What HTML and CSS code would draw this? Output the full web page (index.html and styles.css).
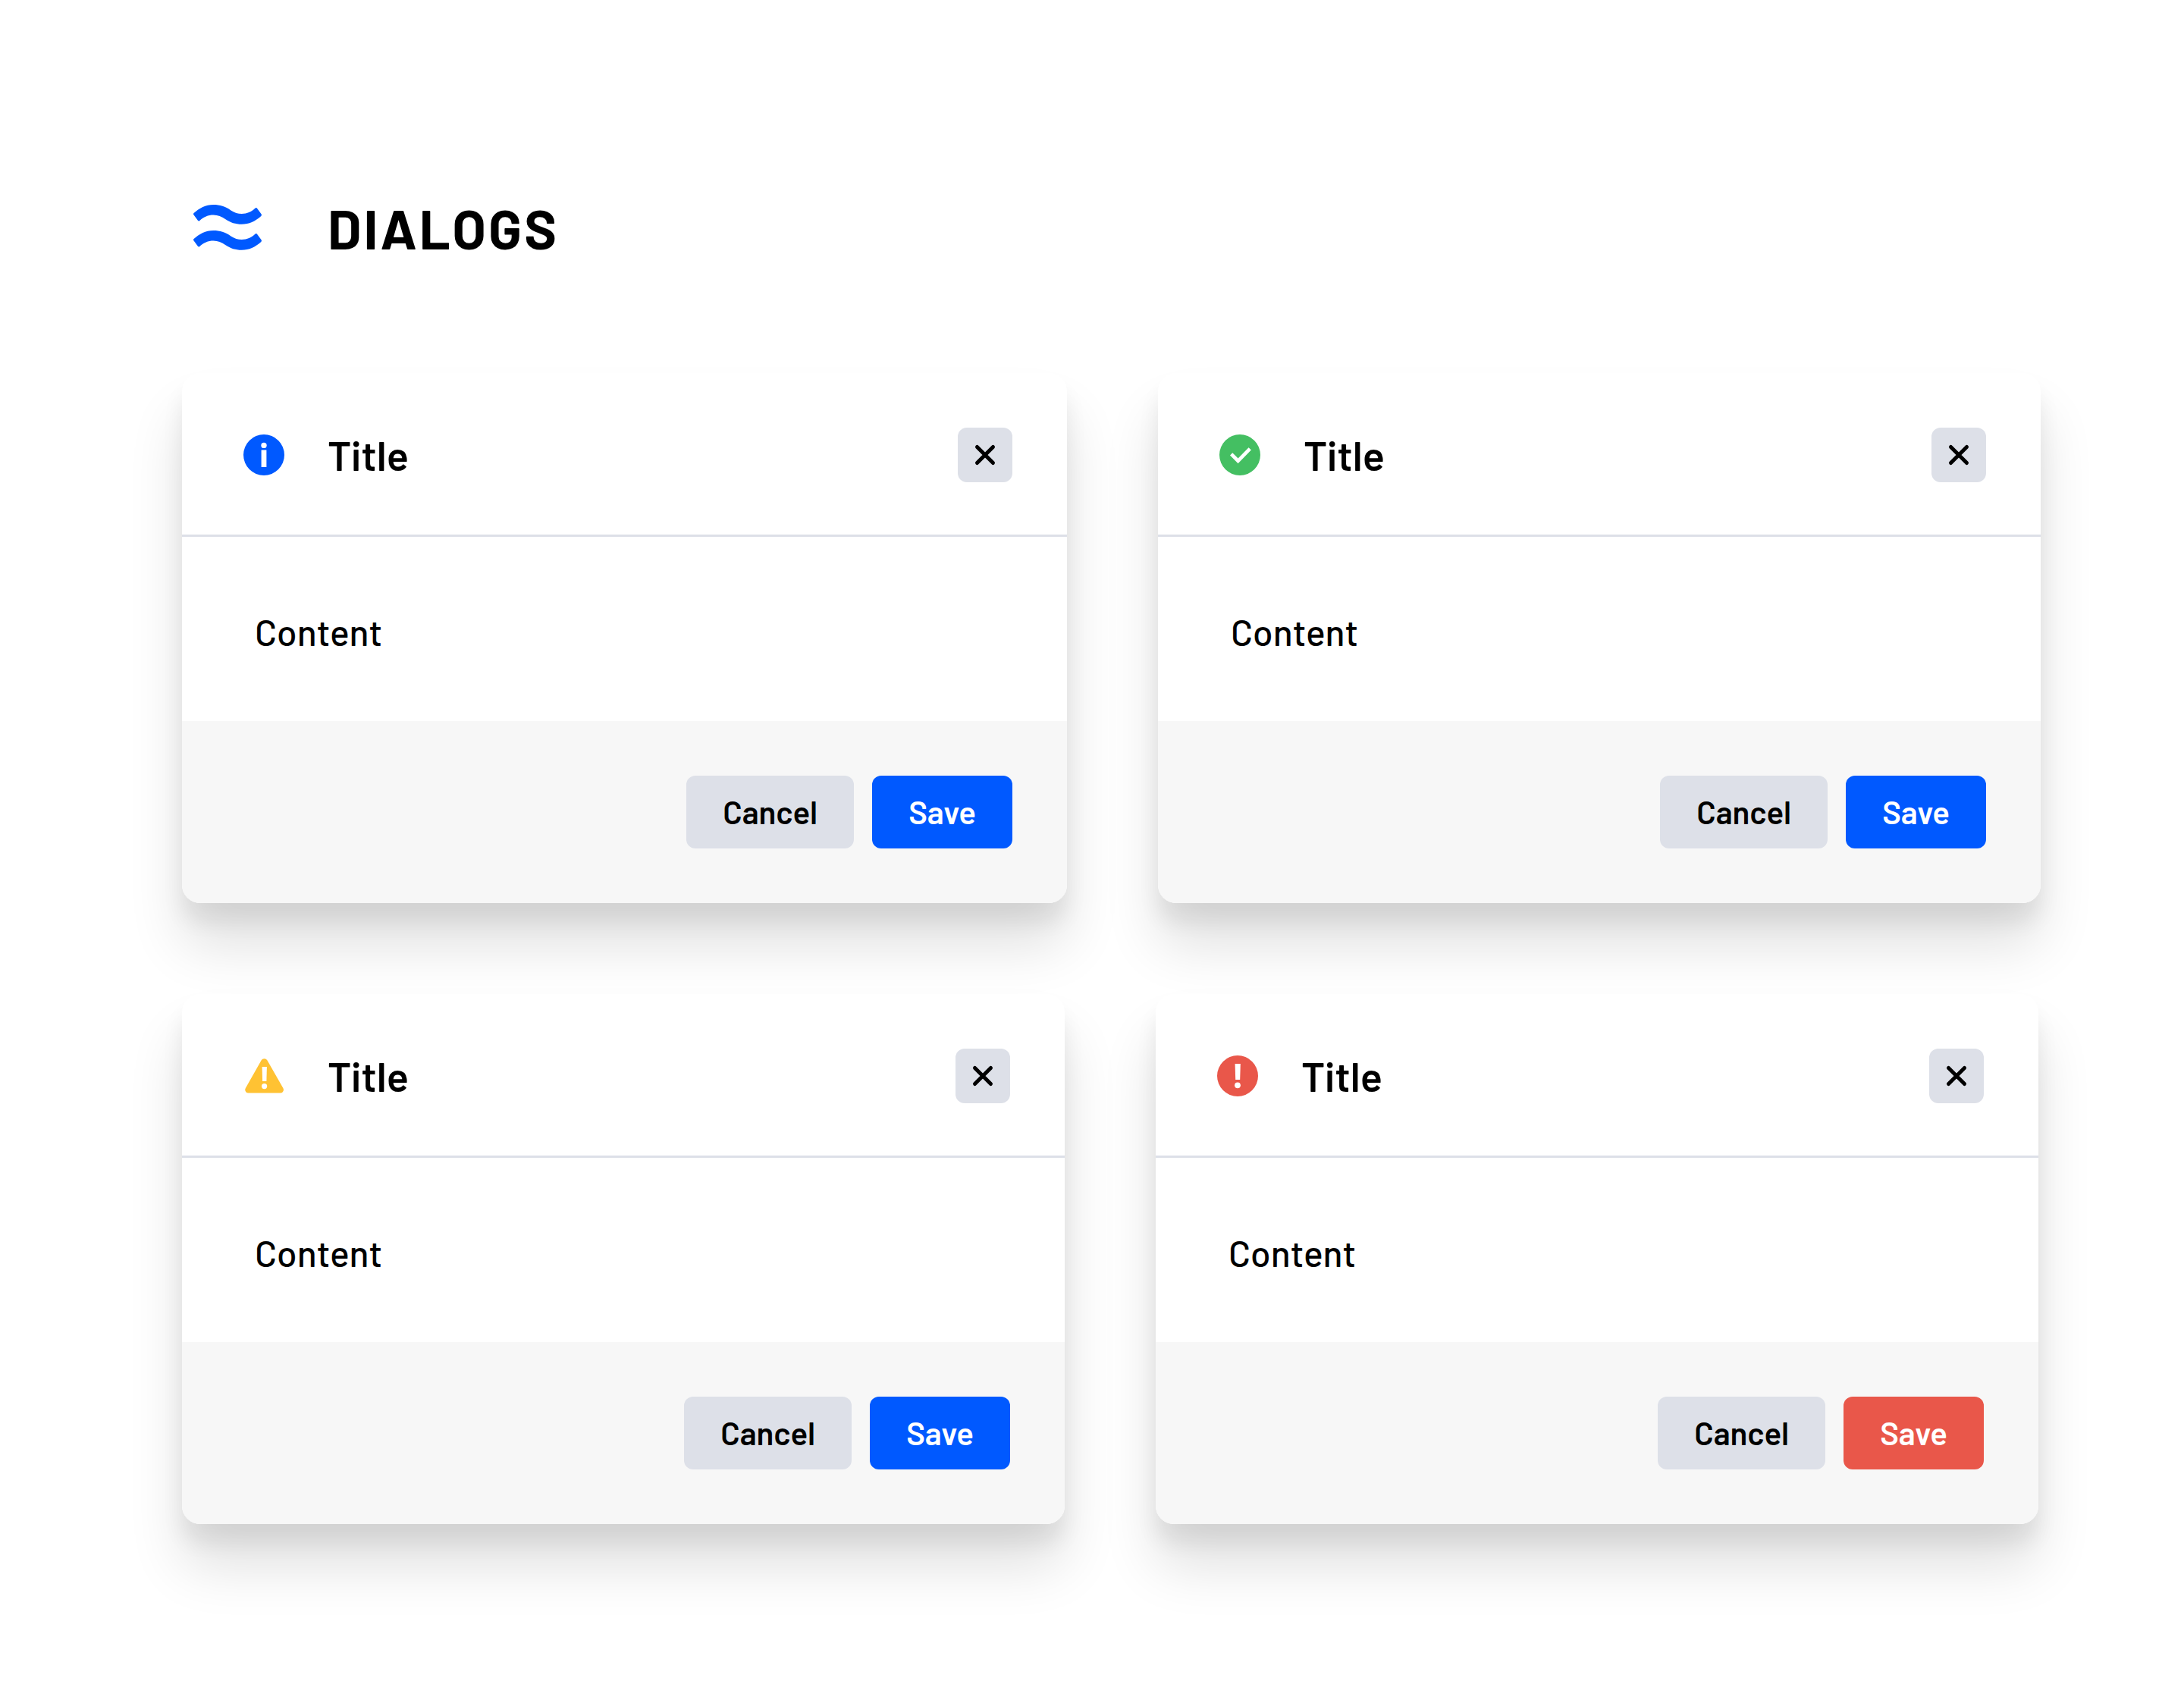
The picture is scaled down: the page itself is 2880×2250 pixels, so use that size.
FILE: index.html
```html
<!DOCTYPE html>
<html lang="en">
<head>
<meta charset="utf-8">
<title>Dialogs</title>
<meta name="viewport" content="width=device-width, initial-scale=1">
<link rel="stylesheet" href="styles.css">
</head>
<body>
<svg class="sprite" aria-hidden="true">
  <symbol id="close" viewBox="0 0 72 72"><path d="M25.5 25.5l21 21M46.5 25.5l-21 21" fill="none" stroke="currentColor" stroke-width="5" stroke-linecap="round"/></symbol>
  <symbol id="wave" viewBox="0 0 120 34"><path d="M15.6 21C23 14.500 31 10 41.400 10C50 10 57 12.200 64.500 17.400C69.500 20.500 73.500 22 78.800 22C86 22 91.500 19.500 96.600 14.600Q98.100 13.300 99.200 14.900L104.700 22.600Q105.500 23.900 104.300 24.900C96.500 31.700 88.500 35.700 78.600 35.700C70.500 35.700 64 33.600 57.500 29.200C52 25.500 47.500 23.400 41.400 23.400C34.500 23.400 28.500 26 23.300 31Q22 32.200 20.900 30.700L15.200 23Q14.500 21.900 15.600 21Z" fill="currentColor" transform="translate(0 -10)"/></symbol>
</svg>

<header class="page-header">
  <svg class="logo" viewBox="0 0 120 120" aria-hidden="true">
    <use href="#wave" y="30" width="120" height="34"/>
    <use href="#wave" y="64" width="120" height="34"/>
  </svg>
  <h1 class="page-title">DIALOGS</h1>
</header>

<main class="dialogs">
  <div class="dialog-row dialog-row-wide">
    <section class="dialog" role="dialog" aria-labelledby="info-title">
      <header class="dialog-header">
        <svg class="status" viewBox="0 0 54 54" aria-hidden="true"><circle cx="27" cy="27" r="27" fill="#0059ff"/><circle cx="27" cy="14.400" r="3.700" fill="#fff"/><path d="M23.600 20.500h6.800V43h-6.800z" fill="#fff"/></svg>
        <h2 class="dialog-title" id="info-title">Title</h2>
        <button class="close" type="button" aria-label="Close"><svg class="close-icon"><use href="#close"/></svg></button>
      </header>
      <p class="dialog-body">Content</p>
      <footer class="dialog-footer">
        <button class="button" type="button">Cancel</button>
        <button class="button button-primary" type="button">Save</button>
      </footer>
    </section>

    <section class="dialog" role="dialog" aria-labelledby="success-title">
      <header class="dialog-header">
        <svg class="status" viewBox="0 0 54 54" aria-hidden="true"><circle cx="27" cy="27" r="27" fill="#44bf62"/><path d="M14 27.600l3.300-3.300 7.300 7.200 14-14.200 3.300 3.300-17.300 17.700z" fill="#fff"/></svg>
        <h2 class="dialog-title" id="success-title">Title</h2>
        <button class="close" type="button" aria-label="Close"><svg class="close-icon"><use href="#close"/></svg></button>
      </header>
      <p class="dialog-body">Content</p>
      <footer class="dialog-footer">
        <button class="button" type="button">Cancel</button>
        <button class="button button-primary" type="button">Save</button>
      </footer>
    </section>
  </div>

  <div class="dialog-row">
    <section class="dialog" role="dialog" aria-labelledby="warning-title">
      <header class="dialog-header">
        <svg class="status" viewBox="0 0 54 54" aria-hidden="true"><path d="M23.700 6.300C25.300 3.400 29.700 3.400 31.300 6.300L52.300 42.900C54.100 45.900 52.200 49.600 48.700 49.600H6.500C3 49.600 1.100 45.900 2.900 42.900Z" fill="#ffc233"/><path d="M24.600 15h6.300l-.5 19h-5.300z" fill="#fff"/><circle cx="27.600" cy="40.600" r="3.600" fill="#fff"/></svg>
        <h2 class="dialog-title" id="warning-title">Title</h2>
        <button class="close" type="button" aria-label="Close"><svg class="close-icon"><use href="#close"/></svg></button>
      </header>
      <p class="dialog-body">Content</p>
      <footer class="dialog-footer">
        <button class="button" type="button">Cancel</button>
        <button class="button button-primary" type="button">Save</button>
      </footer>
    </section>

    <section class="dialog" role="dialog" aria-labelledby="error-title">
      <header class="dialog-header">
        <svg class="status" viewBox="0 0 54 54" aria-hidden="true"><circle cx="27" cy="27" r="27" fill="#e9574a"/><path d="M23.600 11h7.200l-.6 21h-6z" fill="#fff"/><circle cx="27" cy="39.300" r="3.900" fill="#fff"/></svg>
        <h2 class="dialog-title" id="error-title">Title</h2>
        <button class="close" type="button" aria-label="Close"><svg class="close-icon"><use href="#close"/></svg></button>
      </header>
      <p class="dialog-body">Content</p>
      <footer class="dialog-footer">
        <button class="button" type="button">Cancel</button>
        <button class="button button-danger" type="button">Save</button>
      </footer>
    </section>
  </div>
</main>
</body>
</html>
```

FILE: styles.css
```css
* {
  box-sizing: border-box;
}

body {
  margin: 0;
  padding: 240px 0;
  background: #fff;
  color: #000;
  font-family: Barlow, Roboto, sans-serif;
}

h1,
h2,
p {
  margin: 0;
}

.sprite {
  display: none;
}

.page-header {
  display: flex;
  align-items: center;
  gap: 72px;
  margin-bottom: 132px;
  padding: 0 240px;
}

.logo {
  width: 120px;
  height: 120px;
  color: #0059ff;
}

.page-title {
  font-size: 72px;
  font-weight: 700;
  line-height: 88px;
  letter-spacing: 3px;
}

.dialogs {
  display: grid;
  gap: 120px;
}

.dialog-row {
  display: grid;
  grid-template-columns: 1fr 1fr;
  gap: 120px;
  padding: 0 192px 0 240px;
}

.dialog-row-wide {
  grid-template-columns: 1167fr 1164fr;
  padding-right: 189px;
}

.dialog {
  border-radius: 24px;
  background: #fff;
  box-shadow: 0 56px 72px rgba(0, 0, 0, 0.12), 0 24px 28px rgba(0, 0, 0, 0.07);
}

.dialog-header {
  display: flex;
  align-items: center;
  padding: 72px 72px 69px 81px;
  border-bottom: 3px solid #dde0e8;
}

.status {
  width: 54px;
  height: 54px;
  margin-right: 57px;
}

.dialog-title {
  font-size: 54px;
  font-weight: 600;
  line-height: 64px;
}

.close {
  width: 72px;
  height: 72px;
  margin-left: auto;
  padding: 0;
  border: 0;
  border-radius: 12px;
  background: #dde0e8;
  color: #000;
}

.close-icon {
  display: block;
  width: 72px;
  height: 72px;
}

.dialog-body {
  padding: 94px 96px 87px;
  font-size: 48px;
  font-weight: 500;
  line-height: 62px;
}

.dialog-footer {
  display: flex;
  justify-content: flex-end;
  gap: 24px;
  padding: 72px;
  border-radius: 0 0 24px 24px;
  background: #f7f7f7;
}

.button {
  height: 96px;
  padding: 0 48px 2px;
  border: 0;
  border-radius: 12px;
  background: #dde0e8;
  color: #000;
  font: 600 42px/48px Barlow, Roboto, sans-serif;
}

.button-primary {
  background: #0059ff;
  color: #fff;
}

.button-danger {
  background: #e9574a;
  color: #fff;
}
```
